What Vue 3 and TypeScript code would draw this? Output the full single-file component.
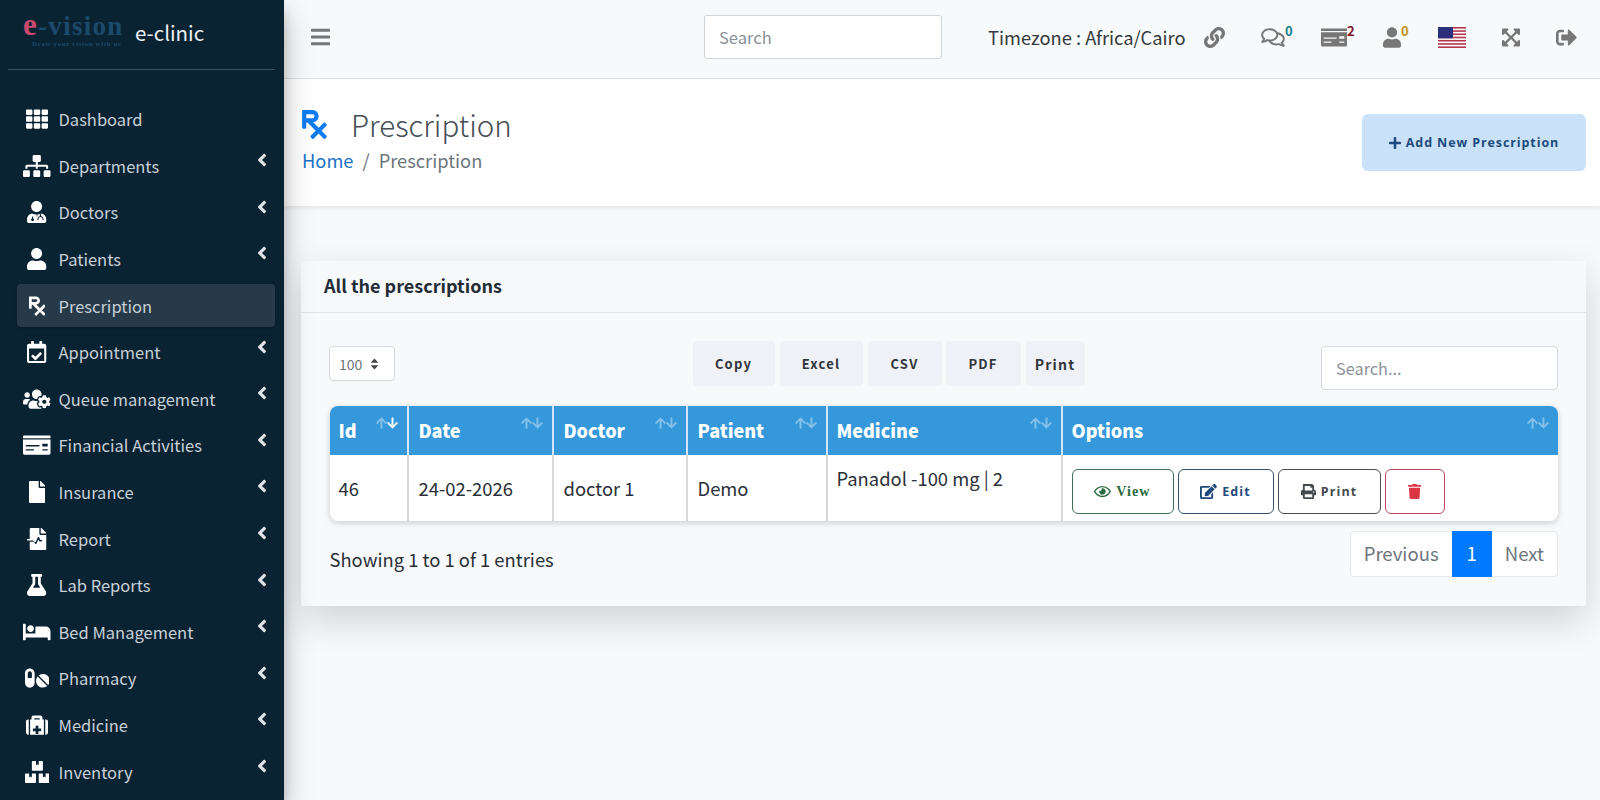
<script setup lang="ts">
interface Ico { vb: string; d: string; d2?: string }
const icons: Record<string, Ico> = {
  th: { vb: '0 0 512 512', d: 'M149.333 56v80c0 13.255-10.745 24-24 24H24c-13.255 0-24-10.745-24-24V56c0-13.255 10.745-24 24-24h101.333c13.255 0 24 10.745 24 24zm181.334 240v-80c0-13.255-10.745-24-24-24H205.333c-13.255 0-24 10.745-24 24v80c0 13.255 10.745 24 24 24h101.333c13.256 0 24.001-10.745 24.001-24zm32-240v80c0 13.255 10.745 24 24 24H488c13.255 0 24-10.745 24-24V56c0-13.255-10.745-24-24-24H386.667c-13.255 0-24 10.745-24 24zm-32 80V56c0-13.255-10.745-24-24-24H205.333c-13.255 0-24 10.745-24 24v80c0 13.255 10.745 24 24 24h101.333c13.256 0 24.001-10.745 24.001-24zm-205.334 56H24c-13.255 0-24 10.745-24 24v80c0 13.255 10.745 24 24 24h101.333c13.255 0 24-10.745 24-24v-80c0-13.255-10.745-24-24-24zM0 376v80c0 13.255 10.745 24 24 24h101.333c13.255 0 24-10.745 24-24v-80c0-13.255-10.745-24-24-24H24c-13.255 0-24 10.745-24 24zm386.667-56H488c13.255 0 24-10.745 24-24v-80c0-13.255-10.745-24-24-24H386.667c-13.255 0-24 10.745-24 24v80c0 13.255 10.745 24 24 24zm0 160H488c13.255 0 24-10.745 24-24v-80c0-13.255-10.745-24-24-24H386.667c-13.255 0-24 10.745-24 24v80c0 13.255 10.745 24 24 24zM181.333 376v80c0 13.255 10.745 24 24 24h101.333c13.255 0 24-10.745 24-24v-80c0-13.255-10.745-24-24-24H205.333c-13.255 0-24 10.745-24 24z' },
  sitemap: { vb: '0 0 640 512', d: 'M128 352H32c-17.67 0-32 14.33-32 32v96c0 17.67 14.33 32 32 32h96c17.67 0 32-14.33 32-32v-96c0-17.67-14.33-32-32-32zm-24-80h192v48h48v-48h192v48h48v-57.59c0-21.17-17.23-38.41-38.41-38.41H344v-64h40c17.67 0 32-14.33 32-32V32c0-17.67-14.33-32-32-32H256c-17.67 0-32 14.33-32 32v96c0 17.67 14.33 32 32 32h40v64H94.41C73.23 224 56 241.23 56 262.41V320h48v-48zm264 80h-96c-17.67 0-32 14.33-32 32v96c0 17.67 14.33 32 32 32h96c17.67 0 32-14.33 32-32v-96c0-17.67-14.33-32-32-32zm240 0h-96c-17.67 0-32 14.33-32 32v96c0 17.67 14.33 32 32 32h96c17.67 0 32-14.33 32-32v-96c0-17.67-14.33-32-32-32z' },
  doctor: { vb: '0 0 448 512', d: 'M224 256c70.7 0 128-57.3 128-128S294.7 0 224 0 96 57.3 96 128s57.3 128 128 128zM112 290C48 305 0 360 0 422v42c0 26.500 21.500 48 48 48h352c26.500 0 48-21.500 48-48v-42c0-62-48-117-112-132-32 18-70 26-112 26s-80-8-112-26z', d2: 'M118 360h24v40a34 34 0 1 1-24 0zM224 300v60h16v-60zM300 352c-36 6-56 34-56 66v30h22v-30c0-24 18-44 48-44s48 20 48 44v30h22v-30c0-32-20-60-56-66v-50h-28z' },
  user: { vb: '0 0 448 512', d: 'M224 256c70.7 0 128-57.3 128-128S294.7 0 224 0 96 57.3 96 128s57.3 128 128 128zm89.6 32h-16.7c-22.2 10.2-46.9 16-72.9 16s-50.6-5.8-72.9-16h-16.7C60.2 288 0 348.2 0 422.4V464c0 26.5 21.5 48 48 48h352c26.5 0 48-21.5 48-48v-41.6c0-74.2-60.2-134.4-134.4-134.4z' },
  rx: { vb: '0 0 384 512', d: 'M301.26 352l78.06-78.06c6.25-6.25 6.25-16.38 0-22.63l-22.63-22.63c-6.25-6.25-16.38-6.25-22.63 0L256 306.74l-83.96-83.96C219.31 216.8 256 176.89 256 128c0-53.02-42.98-96-96-96H16C7.16 32 0 39.16 0 48v256c0 8.84 7.16 16 16 16h32c8.84 0 16-7.16 16-16v-80h18.75l128 128-78.06 78.06c-6.25 6.25-6.25 16.38 0 22.63l22.63 22.63c6.25 6.25 16.38 6.25 22.63 0L256 397.25l78.06 78.06c6.25 6.25 16.38 6.25 22.63 0l22.63-22.63c6.25-6.25 6.25-16.38 0-22.63L301.26 352zM64 96h96c17.64 0 32 14.36 32 32s-14.36 32-32 32H64V96z' },
  calendar: { vb: '0 0 448 512', d: 'M96 12c0-6.627 5.373-12 12-12h40c6.627 0 12 5.373 12 12v52h128V12c0-6.627 5.373-12 12-12h40c6.627 0 12 5.373 12 12v52h48c26.510 0 48 21.490 48 48v352c0 26.510-21.490 48-48 48H48c-26.510 0-48-21.490-48-48V112c0-26.510 21.490-48 48-48h48zM48 176v282c0 3.300 2.700 6 6 6h340c3.300 0 6-2.700 6-6V176zM345 288l-28-28c-4.700-4.700-12-4.700-17 0L194 364l-46-46c-4.700-4.700-12-4.700-17 0l-28 28c-4.700 4.700-4.700 12 0 17l83 83c4.700 4.700 12 4.700 17 0l142-141c4.700-4.700 4.700-12 0-17z' },
  userscog: { vb: '0 0 640 512', d: 'M610.5 341.3c2.6-14.1 2.6-28.5 0-42.6l25.8-14.9c3-1.7 4.3-5.2 3.3-8.5-6.7-21.6-18.2-41.2-33.2-57.4-2.3-2.5-6-3.1-9-1.4l-25.8 14.9c-10.9-9.3-23.4-16.5-36.9-21.3v-29.8c0-3.4-2.4-6.4-5.7-7.1-22.3-5-45-4.8-66.2 0-3.3.7-5.7 3.7-5.7 7.1v29.8c-13.5 4.8-26 12-36.9 21.3l-25.8-14.9c-2.9-1.7-6.7-1.1-9 1.4-15 16.2-26.5 35.8-33.2 57.4-1 3.3.4 6.8 3.3 8.5l25.8 14.9c-2.6 14.1-2.6 28.5 0 42.6l-25.8 14.9c-3 1.7-4.3 5.2-3.3 8.5 6.7 21.6 18.2 41.1 33.2 57.4 2.3 2.5 6 3.1 9 1.4l25.8-14.9c10.9 9.3 23.4 16.5 36.9 21.3v29.8c0 3.4 2.4 6.4 5.7 7.1 22.3 5 45 4.8 66.2 0 3.3-.7 5.7-3.7 5.7-7.1v-29.8c13.5-4.8 26-12 36.9-21.3l25.8 14.9c2.9 1.7 6.7 1.1 9-1.4 15-16.2 26.5-35.8 33.2-57.4 1-3.3-.4-6.8-3.3-8.5l-25.8-14.9zM496 368.5c-26.8 0-48.5-21.8-48.5-48.5s21.8-48.5 48.5-48.5 48.5 21.8 48.5 48.5-21.7 48.5-48.5 48.5zM96 224c35.3 0 64-28.7 64-64s-28.7-64-64-64-64 28.7-64 64 28.7 64 64 64zm224 32c1.9 0 3.7-.5 5.6-.6 8.3-21.7 20.5-42.1 36.3-59.2 7.4-8 17.9-12.6 28.9-12.6 6.900 0 13.700 1.800 19.600 5.300l7.900 4.600c.8-.5 1.600-.9 2.400-1.400 7-14.600 11.200-30.800 11.200-48 0-61.900-50.100-112-112-112S208 82.100 208 144c0 61.900 50.100 112 112 112zm105.200 194.500c-2.300-1.200-4.600-2.600-6.800-3.900-8.200 4.800-15.300 9.800-27.500 9.800-10.900 0-21.400-4.600-28.900-12.600-18.300-19.800-32.300-43.900-40.200-69.600-10.700-34.500 24.900-49.700 25.800-50.300-.1-2.600-.1-5.200 0-7.800l-7.900-4.600c-3.800-2.200-7-5-9.800-8.100-3.300.2-6.500.6-9.800.6-24.600 0-47.600-6-68.500-16h-8.300C179.600 288 128 339.600 128 403.200V432c0 26.500 21.500 48 48 48h255.400c-3.700-6-6.200-12.800-6.200-20.300v-9.200zM173.100 274.600C161.500 263.100 145.600 256 128 256H64c-35.300 0-64 28.700-64 64v32c0 17.700 14.300 32 32 32h65.900c6.300-47.400 34.900-87.300 75.200-109.400z' },
  money: { vb: '0 0 640 512', d: 'M0 448c0 17.670 14.330 32 32 32h576c17.670 0 32-14.330 32-32V128H0v320zm448-208c0-8.840 7.160-16 16-16h96c8.840 0 16 7.160 16 16v32c0 8.840-7.160 16-16 16h-96c-8.840 0-16-7.160-16-16v-32zm0 120c0-4.420 3.580-8 8-8h112c4.420 0 8 3.580 8 8v16c0 4.420-3.580 8-8 8H456c-4.420 0-8-3.580-8-8v-16zM64 264c0-4.420 3.580-8 8-8h304c4.420 0 8 3.580 8 8v16c0 4.420-3.580 8-8 8H72c-4.420 0-8-3.580-8-8v-16zm0 96c0-4.420 3.580-8 8-8h176c4.420 0 8 3.580 8 8v16c0 4.420-3.580 8-8 8H72c-4.420 0-8-3.580-8-8v-16zM624 32H16C7.160 32 0 39.160 0 48v48h640V48c0-8.840-7.160-16-16-16z' },
  file: { vb: '0 0 384 512', d: 'M224 136V0H24C10.700 0 0 10.700 0 24v464c0 13.300 10.700 24 24 24h336c13.300 0 24-10.700 24-24V160H248c-13.200 0-24-10.800-24-24zm160-14.100v6.100H256V0h6.100c6.400 0 12.500 2.500 17 7l97.900 98c4.500 4.500 7 10.600 7 16.900z' },
  report: { vb: '0 0 448 512', d: 'M288 136V0H88C74.700 0 64 10.700 64 24v232H8c-4.400 0-8 3.600-8 8v16c0 4.400 3.600 8 8 8h140.900l39.500 79.100c5.900 11.800 22.700 11.800 28.600 0l49.600-99.200 17.800 35.500c2.700 5.400 8.200 8.800 14.300 8.800H336c8.800 0 16-7.200 16-16s-7.200-16-16-16h-23.900l-31.700-63.300c-5.900-11.800-22.700-11.800-28.600 0L202 334.300 175.800 320H64v168c0 13.300 10.700 24 24 24h336c13.300 0 24-10.700 24-24V160H312c-13.200 0-24-10.800-24-24zm153-31L343.100 7c-4.500-4.500-10.600-7-17-7H320v128h128v-6.100c0-6.300-2.500-12.400-7-16.900z' },
  flask: { vb: '0 0 448 512', d: 'M437.200 403.500L320 215V64h8c13.300 0 24-10.700 24-24V24c0-13.300-10.700-24-24-24H120c-13.300 0-24 10.700-24 24v16c0 13.300 10.700 24 24 24h8v151L10.800 403.500C-18.500 450.600 15.300 512 70.900 512h306.200c55.700 0 89.400-61.500 60.100-108.500zM137.900 320l48.200-77.600c3.700-5.200 5.800-11.600 5.800-18.400V64h64v160c0 6.900 2.200 13.200 5.800 18.400l48.200 77.600h-172z' },
  bed: { vb: '0 0 640 512', d: 'M176 256c44.110 0 80-35.890 80-80s-35.890-80-80-80-80 35.890-80 80 35.890 80 80 80zm352-128H304c-8.840 0-16 7.160-16 16v144H64V80c0-8.840-7.160-16-16-16H16C7.160 64 0 71.160 0 80v352c0 8.840 7.160 16 16 16h32c8.840 0 16-7.160 16-16v-48h512v48c0 8.840 7.160 16 16 16h32c8.840 0 16-7.160 16-16V240c0-61.860-50.140-112-112-112z' },
  pills: { vb: '0 0 576 512', d: 'M112 32C50.100 32 0 82.100 0 144v224c0 61.900 50.100 112 112 112s112-50.100 112-112V144c0-61.900-50.100-112-112-112zm48 224H64V144c0-26.500 21.500-48 48-48s48 21.500 48 48v112zm139.700-29.700c-3.500-3.500-9.400-3.100-12.300.8-45.300 62.500-40.400 150.100 15.900 206.400 56.300 56.300 143.900 61.200 206.400 15.900 4-2.900 4.300-8.800.8-12.300L299.700 226.300zm229.800-19c-56.300-56.300-143.900-61.200-206.400-15.900-4 2.900-4.300 8.800-.8 12.300l210.800 210.800c3.500 3.500 9.400 3.100 12.300-.8 45.300-62.600 40.500-150.100-15.900-206.400z' },
  medkit: { vb: '0 0 512 512', d: 'M96 480h320V128h-32V80c0-26.510-21.490-48-48-48H176c-26.510 0-48 21.490-48 48v48H96v352zm96-384h128v32H192V96zm160 248v48c0 4.418-3.582 8-8 8h-56v56c0 4.418-3.582 8-8 8h-48c-4.418 0-8-3.582-8-8v-56h-56c-4.418 0-8-3.582-8-8v-48c0-4.418 3.582-8 8-8h56v-56c0-4.418 3.582-8 8-8h48c4.418 0 8 3.582 8 8v56h56c4.418 0 8 3.582 8 8zM512 176v256c0 26.510-21.490 48-48 48h-16V128h16c26.510 0 48 21.490 48 48zM64 480H48c-26.510 0-48-21.490-48-48V176c0-26.510 21.490-48 48-48h16v352z' },
  boxes: { vb: '0 0 576 512', d: 'M560 288h-80v96l-32-21.300-32 21.300v-96h-80c-8.800 0-16 7.200-16 16v192c0 8.800 7.200 16 16 16h224c8.800 0 16-7.200 16-16V304c0-8.800-7.200-16-16-16zm-384-64h224c8.800 0 16-7.200 16-16V16c0-8.800-7.200-16-16-16h-80v96l-32-21.300L256 96V0h-80c-8.800 0-16 7.200-16 16v192c0 8.800 7.200 16 16 16zm64 64h-80v96l-32-21.300L96 384v-96H16c-8.800 0-16 7.200-16 16v192c0 8.800 7.200 16 16 16h224c8.800 0 16-7.200 16-16V304c0-8.800-7.200-16-16-16z' },
  chevron: { vb: '0 0 256 512', d: 'M31.700 239l136-136c9.400-9.400 24.600-9.400 33.900 0l22.600 22.600c9.400 9.400 9.400 24.600 0 33.900L127.900 256l96.400 96.400c9.400 9.400 9.400 24.600 0 33.900L201.700 409c-9.400 9.400-24.600 9.400-33.900 0l-136-136c-9.500-9.400-9.500-24.600-.1-34z' },
  bars: { vb: '0 0 448 512', d: 'M16 132h416c8.837 0 16-7.163 16-16V76c0-8.837-7.163-16-16-16H16C7.163 60 0 67.163 0 76v40c0 8.837 7.163 16 16 16zm0 160h416c8.837 0 16-7.163 16-16v-40c0-8.837-7.163-16-16-16H16c-8.837 0-16 7.163-16 16v40c0 8.837 7.163 16 16 16zm0 160h416c8.837 0 16-7.163 16-16v-40c0-8.837-7.163-16-16-16H16c-8.837 0-16 7.163-16 16v40c0 8.837 7.163 16 16 16z' },
  link: { vb: '0 0 512 512', d: 'M326.612 185.391c59.747 59.809 58.927 155.698.36 214.590-.11.120-.24.250-.36.370l-67.200 67.200c-59.270 59.270-155.699 59.262-214.960 0-59.270-59.260-59.270-155.700 0-214.960l37.106-37.106c9.840-9.840 26.786-3.300 27.294 10.606.648 17.722 3.826 35.527 9.690 52.721 1.986 5.822.567 12.262-3.783 16.612l-13.087 13.087c-28.026 28.026-28.905 73.660-1.155 101.960 28.024 28.579 74.086 28.749 102.325.510l67.200-67.190c28.191-28.191 28.073-73.757 0-101.830-3.701-3.694-7.429-6.564-10.341-8.569a16.037 16.037 0 0 1-6.947-12.606c-.396-10.567 3.348-21.456 11.698-29.806l21.054-21.055c5.521-5.521 14.182-6.199 20.584-1.731a152.482 152.482 0 0 1 20.522 17.197zM467.547 44.449c-59.261-59.262-155.690-59.270-214.960 0l-67.200 67.200c-.120.120-.250.250-.360.370-58.566 58.892-59.387 154.781.360 214.590a152.454 152.454 0 0 0 20.521 17.196c6.402 4.468 15.064 3.789 20.584-1.731l21.054-21.055c8.350-8.350 12.094-19.239 11.698-29.806a16.037 16.037 0 0 0-6.947-12.606c-2.912-2.005-6.640-4.875-10.341-8.569-28.073-28.073-28.191-73.639 0-101.830l67.200-67.190c28.239-28.239 74.300-28.069 102.325.510 27.750 28.300 26.872 73.934-1.155 101.960l-13.087 13.087c-4.350 4.350-5.769 10.790-3.783 16.612 5.864 17.194 9.042 34.999 9.690 52.721.509 13.906 17.454 20.446 27.294 10.606l37.106-37.106c59.271-59.259 59.271-155.699.001-214.959z' },
  comments: { vb: '0 0 576 512', d: 'M532 386.200c27.500-27.100 44-61.100 44-98.200 0-80-76.500-146.100-176.200-157.900C368.300 72.500 294.300 32 208 32 93.100 32 0 103.600 0 192c0 37 16.500 71 44 98.200-15.300 30.700-37.300 54.500-37.700 54.900-6.300 6.700-8.100 16.500-4.400 25 3.600 8.500 12 14 21.200 14 53.500 0 96.700-20.200 125.200-38.800 9.200 2.100 18.700 3.700 28.400 4.900C208.100 407.600 281.800 448 368 448c20.800 0 40.800-2.400 59.800-6.800C456.300 459.700 499.400 480 553 480c9.200 0 17.500-5.500 21.200-14 3.600-8.500 1.900-18.300-4.400-25-.4-.3-22.500-24.100-37.800-54.800zm-392.800-92.300L122.100 305c-14.100 9.100-28.500 16.300-43.100 21.400 2.700-4.700 5.400-9.700 8-14.800l15.500-31.100L77.700 256C64.200 242.600 48 220.700 48 192c0-60.700 73.300-112 160-112s160 51.300 160 112-73.300 112-160 112c-16.500 0-33-1.900-49-5.600l-19.800-4.500zM498.300 352l-24.700 24.400 15.500 31.100c2.600 5.100 5.300 10.100 8 14.800-14.600-5.100-29-12.300-43.100-21.400l-17.100-11.100-19.800 4.600c-16 3.700-32.500 5.600-49 5.600-54 0-102.200-20.100-131.300-49.700C338 339.500 416 272.900 416 192c0-3.400-.3-6.800-.5-10.100C479.700 196.500 528 238.800 528 288c0 28.700-16.200 50.600-29.700 64z' },
  expand: { vb: '0 0 448 512', d: 'M448 344v112a23.940 23.940 0 0 1-24 24H312c-21.390 0-32.090-25.900-17-41l36.200-36.200L224 295.600 116.770 402.900 153 439c15.090 15.100 4.390 41-17 41H24a23.940 23.940 0 0 1-24-24V344c0-21.400 25.890-32.100 41-17l36.190 36.200L184.460 256 77.190 148.700 41 185c-15.100 15.100-41 4.400-41-17V56a23.940 23.940 0 0 1 24-24h112c21.390 0 32.090 25.900 17 41l-36.200 36.200L224 216.400l107.230-107.200L295 73c-15.090-15.100-4.390-41 17-41h112a23.940 23.940 0 0 1 24 24v112c0 21.400-25.890 32.100-41 17l-36.190-36.200L263.540 256l107.270 107.300L407 327.100c15.100-15.200 41-4.500 41 16.900z' },
  signout: { vb: '0 0 512 512', d: 'M497 273L329 441c-15 15-41 4.500-41-17v-96H152c-13.300 0-24-10.700-24-24v-96c0-13.300 10.700-24 24-24h136V88c0-21.400 25.900-32 41-17l168 168c9.300 9.400 9.300 24.600 0 34zM192 436v-40c0-6.600-5.400-12-12-12H96c-17.700 0-32-14.300-32-32V160c0-17.700 14.300-32 32-32h84c6.600 0 12-5.400 12-12V76c0-6.600-5.400-12-12-12H96c-53 0-96 43-96 96v192c0 53 43 96 96 96h84c6.600 0 12-5.400 12-12z' },
  plus: { vb: '0 0 448 512', d: 'M416 208H272V64c0-17.670-14.330-32-32-32h-32c-17.670 0-32 14.330-32 32v144H32c-17.670 0-32 14.330-32 32v32c0 17.670 14.330 32 32 32h144v144c0 17.670 14.330 32 32 32h32c17.670 0 32-14.330 32-32V304h144c17.670 0 32-14.330 32-32v-32c0-17.670-14.330-32-32-32z' },
  eye: { vb: '0 0 576 512', d: 'M288 144a110.940 110.940 0 0 0-31.240 5 55.400 55.400 0 0 1 7.240 27 56 56 0 0 1-56 56 55.400 55.400 0 0 1-27-7.240A111.710 111.710 0 1 0 288 144zm284.520 97.400C518.290 135.590 410.930 64 288 64S57.680 135.640 3.480 241.410a32.350 32.350 0 0 0 0 29.190C57.710 376.410 165.070 448 288 448s230.320-71.640 284.520-177.410a32.350 32.350 0 0 0 0-29.190zM288 400c-98.650 0-189.090-55-237.930-144C98.910 167 189.340 112 288 112s189.090 55 237.930 144C477.100 345 386.660 400 288 400z' },
  edit: { vb: '0 0 576 512', d: 'M402.600 83.200l90.200 90.200c3.800 3.800 3.800 10 0 13.800L274.400 405.600l-92.800 10.300c-12.400 1.400-22.900-9.100-21.500-21.500l10.300-92.800L388.800 83.200c3.800-3.800 10-3.800 13.800 0zm162-22.900l-48.800-48.800c-15.200-15.200-39.900-15.200-55.200 0l-35.400 35.400c-3.800 3.800-3.800 10 0 13.800l90.200 90.200c3.800 3.800 10 3.800 13.800 0l35.400-35.400c15.200-15.300 15.200-40 0-55.200zM384 346.200V448H64V128h229.800c3.200 0 6.200-1.300 8.500-3.500l40-40c7.600-7.600 2.200-20.500-8.500-20.500H48C21.500 64 0 85.500 0 112v352c0 26.500 21.500 48 48 48h352c26.500 0 48-21.500 48-48V306.200c0-10.700-12.900-16-20.500-8.500l-40 40c-2.200 2.300-3.500 5.300-3.500 8.500z' },
  print: { vb: '0 0 512 512', d: 'M448 192V77.250c0-8.490-3.370-16.620-9.370-22.630L393.370 9.370c-6-6-14.140-9.370-22.630-9.370H96C78.330 0 64 14.330 64 32v160c-35.350 0-64 28.650-64 64v112c0 8.840 7.160 16 16 16h48v96c0 17.670 14.330 32 32 32h320c17.670 0 32-14.330 32-32v-96h48c8.840 0 16-7.160 16-16V256c0-35.350-28.650-64-64-64zm-64 256H128v-96h256v96zm0-224H128V64h192v48c0 8.840 7.160 16 16 16h48v96zm48 72c-13.250 0-24-10.750-24-24 0-13.260 10.750-24 24-24s24 10.740 24 24c0 13.250-10.750 24-24 24z' },
  trash: { vb: '0 0 448 512', d: 'M432 32H312l-9.400-18.700A24 24 0 0 0 281.100 0H166.800a23.720 23.720 0 0 0-21.400 13.300L136 32H16A16 16 0 0 0 0 48v32a16 16 0 0 0 16 16h416a16 16 0 0 0 16-16V48a16 16 0 0 0-16-16zM53.200 467a48 48 0 0 0 47.900 45h245.800a48 48 0 0 0 47.900-45L416 128H32z' },
  up: { vb: '0 0 448 512', d: 'M34.900 289.500l-22.200-22.200c-9.400-9.400-9.400-24.600 0-33.900L207 39c9.400-9.400 24.600-9.400 33.900 0l194.300 194.300c9.400 9.400 9.400 24.600 0 33.900L413 289.400c-9.500 9.500-25 9.300-34.300-.4L264 168.600V456c0 13.300-10.700 24-24 24h-32c-13.300 0-24-10.700-24-24V168.600L69.200 289.100c-9.300 9.800-24.800 10-34.300.4z' },
  down: { vb: '0 0 448 512', d: 'M413.100 222.500l22.200 22.200c9.400 9.400 9.400 24.600 0 33.900L241 473c-9.400 9.400-24.600 9.400-33.900 0L12.700 278.600c-9.400-9.400-9.400-24.600 0-33.900l22.200-22.200c9.500-9.500 25-9.300 34.300.4L184 343.400V56c0-13.300 10.700-24 24-24h32c13.300 0 24 10.700 24 24v287.400l114.800-120.500c9.300-9.800 24.800-10 34.300-.4z' }
}

const navItems = [
  { label: 'Dashboard', icon: 'th', sub: false },
  { label: 'Departments', icon: 'sitemap', sub: true },
  { label: 'Doctors', icon: 'doctor', sub: true },
  { label: 'Patients', icon: 'user', sub: true },
  { label: 'Prescription', icon: 'rx', sub: false, active: true },
  { label: 'Appointment', icon: 'calendar', sub: true },
  { label: 'Queue management', icon: 'userscog', sub: true },
  { label: 'Financial Activities', icon: 'money', sub: true },
  { label: 'Insurance', icon: 'file', sub: true },
  { label: 'Report', icon: 'report', sub: true },
  { label: 'Lab Reports', icon: 'flask', sub: true },
  { label: 'Bed Management', icon: 'bed', sub: true },
  { label: 'Pharmacy', icon: 'pills', sub: true },
  { label: 'Medicine', icon: 'medkit', sub: true },
  { label: 'Inventory', icon: 'boxes', sub: true }
]

const columns = ['Id', 'Date', 'Doctor', 'Patient', 'Medicine', 'Options']
const exportButtons = ['Copy', 'Excel', 'CSV', 'PDF', 'Print']
const flagStripes = [0, 2, 4, 6, 8, 10, 12]
</script>

<template>
  <div class="page">
    <aside class="sidebar">
      <div class="brand">
        <div class="logo">
          <div class="logo-main"><span class="logo-e">e</span>-vision</div>
          <div class="logo-sub">Draw your vision with us</div>
        </div>
        <span class="brand-name">e-clinic</span>
      </div>
      <nav class="nav">
        <a v-for="item in navItems" :key="item.label" class="nav-item" :class="{ active: item.active }">
          <span class="nav-icon">
            <svg :viewBox="icons[item.icon].vb" class="ni"><path :d="icons[item.icon].d" fill-rule="evenodd" /><path v-if="icons[item.icon].d2" :d="icons[item.icon].d2" class="ni-dark" /></svg>
          </span>
          <span class="nav-label">{{ item.label }}</span>
          <svg v-if="item.sub" :viewBox="icons.chevron.vb" class="chev"><path :d="icons.chevron.d" /></svg>
        </a>
      </nav>
    </aside>

    <main class="main">
      <header class="topbar">
        <svg :viewBox="icons.bars.vb" class="bars"><path :d="icons.bars.d" /></svg>
        <div class="top-search">Search</div>
        <div class="tz">Timezone : Africa/Cairo</div>
        <svg :viewBox="icons.link.vb" class="ti ti-link"><path :d="icons.link.d" /></svg>
        <div class="ti-wrap w-com">
          <svg :viewBox="icons.comments.vb" class="ti ti-com"><path :d="icons.comments.d" /></svg><sup class="count teal">0</sup>
        </div>
        <div class="ti-wrap w-money">
          <svg :viewBox="icons.money.vb" class="ti ti-money"><path :d="icons.money.d" /></svg><sup class="count maroon">2</sup>
        </div>
        <div class="ti-wrap w-user">
          <svg :viewBox="icons.user.vb" class="ti ti-user"><path :d="icons.user.d" /></svg><sup class="count gold">0</sup>
        </div>
        <svg viewBox="0 0 28 21" class="flag" preserveAspectRatio="none">
          <rect width="28" height="21" fill="#fff" />
          <rect v-for="s in flagStripes" :key="s" x="0" :y="s * 1.615" width="28" height="1.615" fill="#b2394e" />
          <rect width="15" height="11.3" fill="#2b2f7c" />
        </svg>
        <svg :viewBox="icons.expand.vb" class="ti ti-exp"><path :d="icons.expand.d" /></svg>
        <svg :viewBox="icons.signout.vb" class="ti ti-out"><path :d="icons.signout.d" /></svg>
      </header>

      <section class="content-head">
        <div>
          <div class="title-row">
            <svg :viewBox="icons.rx.vb" class="title-ico"><path :d="icons.rx.d" /></svg>
            <h1 class="title">Prescription</h1>
          </div>
          <div class="crumbs"><a class="home">Home</a><span class="sep">/</span><span class="cur">Prescription</span></div>
        </div>
        <button class="add-btn">
          <svg :viewBox="icons.plus.vb" class="add-ico"><path :d="icons.plus.d" /></svg>
          <span>Add New Prescription</span>
        </button>
      </section>

      <section class="card">
        <div class="card-head">All the prescriptions</div>
        <div class="card-body">
          <div class="toolbar">
            <div class="len">
              <span>100</span>
              <svg viewBox="0 0 10 14" class="len-ico"><path d="M5 0.5 9.5 5.5H.5zM5 13.5 .5 8.500H9.500z" /></svg>
            </div>
            <div class="exports">
              <button v-for="b in exportButtons" :key="b" class="exp-btn" :class="'exp-' + b.toLowerCase()">{{ b }}</button>
            </div>
            <div class="dt-search">Search...</div>
          </div>

          <div class="table-wrap">
            <table class="tbl">
              <thead>
                <tr>
                  <th v-for="(c, i) in columns" :key="c" :class="'col' + i">
                    {{ c }}
                    <span class="sort">
                      <svg :viewBox="icons.up.vb" class="arr dim"><path :d="icons.up.d" /></svg>
                      <svg :viewBox="icons.down.vb" class="arr" :class="{ dim: i !== 0 }"><path :d="icons.down.d" /></svg>
                    </span>
                  </th>
                </tr>
              </thead>
              <tbody>
                <tr>
                  <td>46</td>
                  <td>24-02-2026</td>
                  <td>doctor 1</td>
                  <td>Demo</td>
                  <td class="top">Panadol -100 mg | 2</td>
                  <td class="actions">
                    <div class="act-row">
                      <button class="act view"><svg :viewBox="icons.eye.vb" class="act-ico"><path :d="icons.eye.d" /></svg>View</button>
                      <button class="act edit"><svg :viewBox="icons.edit.vb" class="act-ico"><path :d="icons.edit.d" /></svg>Edit</button>
                      <button class="act prt"><svg :viewBox="icons.print.vb" class="act-ico"><path :d="icons.print.d" /></svg>Print</button>
                      <button class="act del"><svg :viewBox="icons.trash.vb" class="act-ico"><path :d="icons.trash.d" /></svg></button>
                    </div>
                  </td>
                </tr>
              </tbody>
            </table>
          </div>

          <div class="foot">
            <div class="info">Showing 1 to 1 of 1 entries</div>
            <div class="pager">
              <span class="pg">Previous</span>
              <span class="pg on">1</span>
              <span class="pg">Next</span>
            </div>
          </div>
        </div>
      </section>
    </main>
  </div>
</template>

<style>
html, body { margin: 0; overflow: hidden; }
</style>

<style scoped>
.page {
  display: flex;
  width: 1600px;
  height: 800px;
  overflow: hidden;
  background: #f8f9fb;
  font-family: "Noto Sans CJK SC", "Noto Sans", sans-serif;
  color: #212529;
}
.sidebar {
  width: 284px;
  flex: none;
  background: #0a2333;
  box-shadow: 0 14px 28px rgba(0, 0, 0, .25), 0 10px 10px rgba(0, 0, 0, .15);
  position: relative;
  z-index: 2;
  padding: 0 9px 0 8px;
  box-sizing: border-box;
}
.brand {
  height: 69px;
  border-bottom: 1px solid rgba(255, 255, 255, .2);
  display: flex;
  align-items: flex-start;
  box-sizing: content-box;
}
.logo { width: 112px; margin-left: 15px; padding-top: 12px; flex: none; }
.logo-main {
  font: bold 27px/26px "Liberation Serif", serif;
  letter-spacing: 1.300px;
  color: #1b4a6b;
}
.logo-e { color: #c94a6e; font-size: 31px; }
.logo-sub {
  font: bold 7px/9px "Liberation Serif", serif;
  letter-spacing: .6px;
  color: #1b4a6b;
  margin: 1px 0 0 9px;
  white-space: nowrap;
}
.brand-name { font-size: 20.500px; line-height: 30px; color: #eaf0f4; margin-top: 17px; }
.nav { display: flex; flex-direction: column; gap: 3.600px; padding: 27.700px 0 0 9px; }
.nav-item {
  height: 43px;
  flex: none;
  display: flex;
  align-items: center;
  border-radius: 4px;
  color: #c8d0d8;
  font-size: 16.500px;
  position: relative;
}
.nav-item.active { background: #263a49; box-shadow: 0 1px 3px rgba(0, 0, 0, .3); }
.nav-icon { width: 40px; margin-right: 1.500px; flex: none; display: flex; justify-content: center; color: #fff; }
.ni { height: 22px; width: auto; display: block; fill: #fff; }
.ni-dark { fill: #0a2333; }
.nav-label { line-height: 24px; }
.chev {
  position: absolute;
  right: 8px;
  top: 6px;
  width: 10px;
  height: 20px;
  fill: #dfe4e8;
}

.main { flex: 1; min-width: 0; display: flex; flex-direction: column; }
.topbar {
  flex: none;
  background: #f8f9fa;
  border-bottom: 1px solid #dee2e6;
  display: flex;
  align-items: center;
  color: #707070;
  padding: 0 0 4px 27px;
  box-sizing: content-box;
  height: 74px;
}
.bars { width: 19px; height: 22px; fill: #777; flex: none; }
.top-search {
  margin-left: 374px;
  width: 238px;
  height: 44px;
  box-sizing: border-box;
  background: #fff;
  border: 1px solid #ced4da;
  border-radius: 3px;
  padding-left: 14px;
  line-height: 42px;
  font-size: 16.500px;
  color: #8b9199;
}
.tz { margin-left: 46px; font-size: 18.300px; line-height: 28px; color: #343a40; width: 216px; white-space: nowrap; }
.ti { fill: #777; display: block; flex: none; }
.ti-link { width: 21px; height: 21px; }
.ti-wrap { display: flex; flex: none; align-items: flex-start; position: relative; }
.w-com { margin-left: 36px; }
.ti-com { width: 24px; height: 21px; }
.w-money { margin-left: 29px; }
.ti-money { width: 26px; height: 21px; }
.w-user { margin-left: 29px; }
.ti-user { width: 18px; height: 21px; }
.count { font-size: 13px; font-weight: 700; line-height: 13px; margin: -3px 0 0 0; width: 7px; }
.teal { color: #17808a; }
.maroon { color: #7d1525; }
.gold { color: #c2930f; }
.flag { width: 28px; height: 21px; margin-left: 30px; flex: none; }
.ti-exp { width: 18px; height: 21px; margin-left: 36px; }
.ti-out { width: 21px; height: 21px; margin-left: 36px; }

.content-head {
  height: 127px;
  flex: none;
  background: #fff;
  box-shadow: 0 2px 4px rgba(0, 0, 0, .08);
  display: flex;
  justify-content: space-between;
  align-items: flex-start;
  padding: 0 14px 0 18px;
  box-sizing: border-box;
}
.title-row { display: flex; align-items: center; margin-top: 23px; }
.title-ico { width: 25px; height: 33px; fill: #0d7bf2; flex: none; }
.title { font-size: 29.500px; font-weight: 300; line-height: 44px; margin: 0 0 0 24px; color: #454d56; }
.crumbs { font-size: 18.300px; line-height: 28px; margin-top: 0; display: flex; color: #6c757d; }
.home { color: #1a73c8; }
.sep { margin: 0 9px; }
.add-btn {
  margin-top: 35px;
  width: 224px;
  height: 57px;
  background: #c9e2fa;
  border: 0;
  border-radius: 6px;
  display: flex;
  align-items: center;
  justify-content: center;
  gap: 5px;
  color: #1f4a7d;
  font: 700 12.500px/18px "Open Sans", sans-serif;
  letter-spacing: .9px;
  padding: 0;
}
.add-ico { width: 12px; height: 14px; fill: #1f4a7d; flex: none; }

.card {
  margin: 55px 14px 0 17px;
  background: #f8f9fb;
  box-shadow: 0 14px 38px rgba(0, 0, 0, .16);
  border-radius: 2px;
}
.card-head {
  height: 51px;
  border-bottom: 1px solid #e2e4e8;
  line-height: 49px;
  padding-left: 23px;
  font-size: 18px;
  font-weight: 700;
  color: #222b36;
}
.card-body { padding: 28px 28px 29px 28.500px; }
.toolbar { display: flex; position: relative; height: 65px; }
.len {
  width: 66px;
  height: 35px;
  margin: 5px 0 0 -.5px;
  box-sizing: border-box;
  background: #fff;
  border: 1px solid #d5d9de;
  border-radius: 4px;
  display: flex;
  align-items: center;
  padding-left: 9px;
  font-size: 14px;
  color: #6c757d;
  gap: 8px;
}
.len-ico { width: 9px; height: 12px; fill: #444; }
.exports { display: flex; margin-left: 297.500px; height: 45px; }
.exp-btn {
  border: 0;
  background: #f0f1f6;
  border-radius: 4px;
  height: 45px;
  padding: 0;
  font: 700 13px/18px "Noto Sans CJK SC", sans-serif;
  letter-spacing: 1.200px;
  color: #30353c;
}
.exp-copy { width: 82px; margin-right: 5px; }
.exp-excel { width: 83px; margin-right: 5px; }
.exp-csv { width: 74px; margin-right: 4px; }
.exp-pdf { width: 75px; margin-right: 5px; }
.exp-print { width: 59px; font-size: 14px; }
.dt-search {
  margin-left: auto;
  margin-top: 5px;
  width: 237px;
  height: 44px;
  box-sizing: border-box;
  background: #fff;
  border: 1px solid #d5d9de;
  border-radius: 4px;
  padding-left: 14px;
  line-height: 42px;
  font-size: 16.300px;
  color: #8b9199;
}
.table-wrap {
  border-radius: 8px;
  overflow: hidden;
  box-shadow: 0 2px 6px rgba(0, 0, 0, .18);
  background: #fff;
}
.tbl { width: 100%; border-collapse: collapse; table-layout: fixed; font-size: 18.400px; }
.tbl th {
  height: 49px;
  box-sizing: border-box;
  padding: 0 10px;
  background: #3498db;
  color: #fff;
  text-align: left;
  font-weight: 900;
  font-size: 18px;
  line-height: 49px;
  border-right: 2px solid #d4e6f3;
  position: relative;
}
.tbl th:last-child, .tbl td:last-child { border-right: 0; }
.col0 { width: 78px; padding-left: 9px !important; }
.col1 { width: 145px; }
.col2 { width: 134px; }
.col3 { width: 140px; }
.col4 { width: 235px; padding-left: 9px !important; }
.col5 { padding-left: 9px !important; }
.tbl td {
  height: 66px;
  box-sizing: border-box;
  padding: 0 10px;
  border-right: 2px solid #d8d8d8;
  color: #2a3038;
  line-height: 28px;
  vertical-align: middle;
}
.tbl td:first-child { padding-left: 9px; }
.tbl td.top { vertical-align: top; padding: 9px 0 0 9px; }
.sort {
  position: absolute;
  right: 9px;
  top: 10px;
  display: flex;
  gap: 0;
}
.arr { width: 11px; height: 14px; fill: #fff; display: block; }
.arr.dim { opacity: .4; }
.actions { padding: 0 0 0 9px !important; }
.act-row { display: flex; gap: 4px; margin-top: 7px; }
.act {
  height: 45px;
  box-sizing: border-box;
  background: #fff;
  border-radius: 6px;
  border: 1px solid #444;
  display: flex;
  align-items: center;
  justify-content: center;
  gap: 5px;
  padding: 0;
  font: 700 12.500px/18px "Open Sans", sans-serif;
  letter-spacing: 1.100px;
}
.act-ico { height: 15px; width: auto; display: block; fill: currentColor; }
.view { width: 102px; color: #2a6b42; border-color: #3f6f56; font-family: "Liberation Serif", serif; font-size: 14px; }
.edit { width: 96px; color: #1f4a7d; border-color: #33526f; }
.prt { width: 103px; color: #454a50; border-color: #494f55; }
.del { width: 60px; color: #dc3545; border-color: #b94a5a; }
.foot { display: flex; justify-content: space-between; align-items: flex-start; margin-top: 10px; }
.info { margin-top: 14px; font-size: 18.400px; line-height: 28px; color: #2a3038; }
.pager {
  display: flex;
  height: 46px;
  background: #fff;
  border: 1px solid #e6e8ec;
  border-radius: 4px;
  box-sizing: border-box;
  font-size: 18.500px;
  line-height: 42px;
  color: #6c757d;
}
.pg { padding: 0 13px; }
.pg.on { background: #007bff; color: #fff; margin: -1px 0; line-height: 44px; padding: 0 15px; }
</style>
